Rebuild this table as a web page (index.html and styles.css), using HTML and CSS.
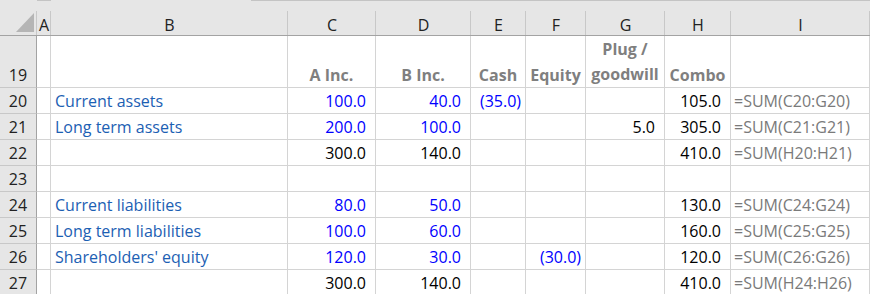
FILE: index.html
```html
<!DOCTYPE html>
<html>
    <head>
        <title>Consolidation</title>
        <link rel="stylesheet" href="styles.css">
    </head>
    <body>
        <div class="sheet">
            <div class="corner">
                <svg width="18" height="19" viewBox="0 0 18 19"><polygon points="18,0 18,19 0,19" fill="#b5b5b5"/></svg>
            </div>
            <div class="col">A</div>
            <div class="col first">B</div>
            <div class="col">C</div>
            <div class="col">D</div>
            <div class="col">E</div>
            <div class="col">F</div>
            <div class="col">G</div>
            <div class="col">H</div>
            <div class="col">I</div>

            <div class="row">19</div>
            <div class="c"></div>
            <div class="c"></div>
            <div class="c head">A Inc.</div>
            <div class="c head">B Inc.</div>
            <div class="c head">Cash</div>
            <div class="c head">Equity</div>
            <div class="c head wrap">Plug /<br>goodwill</div>
            <div class="c head">Combo</div>
            <div class="c"></div>

            <div class="row">20</div>
            <div class="c"></div>
            <div class="c label">Current assets</div>
            <div class="c num input">100.0</div>
            <div class="c num input">40.0</div>
            <div class="c num neg input">(35.0)</div>
            <div class="c"></div>
            <div class="c"></div>
            <div class="c num">105.0</div>
            <div class="c formula">=SUM(C20:G20)</div>

            <div class="row">21</div>
            <div class="c"></div>
            <div class="c label">Long term assets</div>
            <div class="c num input">200.0</div>
            <div class="c num input">100.0</div>
            <div class="c"></div>
            <div class="c"></div>
            <div class="c num">5.0</div>
            <div class="c num">305.0</div>
            <div class="c formula">=SUM(C21:G21)</div>

            <div class="row">22</div>
            <div class="c"></div>
            <div class="c"></div>
            <div class="c num">300.0</div>
            <div class="c num">140.0</div>
            <div class="c"></div>
            <div class="c"></div>
            <div class="c"></div>
            <div class="c num">410.0</div>
            <div class="c formula">=SUM(H20:H21)</div>

            <div class="row">23</div>
            <div class="c"></div>
            <div class="c"></div>
            <div class="c"></div>
            <div class="c"></div>
            <div class="c"></div>
            <div class="c"></div>
            <div class="c"></div>
            <div class="c"></div>
            <div class="c"></div>

            <div class="row">24</div>
            <div class="c"></div>
            <div class="c label">Current liabilities</div>
            <div class="c num input">80.0</div>
            <div class="c num input">50.0</div>
            <div class="c"></div>
            <div class="c"></div>
            <div class="c"></div>
            <div class="c num">130.0</div>
            <div class="c formula">=SUM(C24:G24)</div>

            <div class="row">25</div>
            <div class="c"></div>
            <div class="c label">Long term liabilities</div>
            <div class="c num input">100.0</div>
            <div class="c num input">60.0</div>
            <div class="c"></div>
            <div class="c"></div>
            <div class="c"></div>
            <div class="c num">160.0</div>
            <div class="c formula">=SUM(C25:G25)</div>

            <div class="row">26</div>
            <div class="c"></div>
            <div class="c label">Shareholders' equity</div>
            <div class="c num input">120.0</div>
            <div class="c num input">30.0</div>
            <div class="c"></div>
            <div class="c num neg input">(30.0)</div>
            <div class="c"></div>
            <div class="c num">120.0</div>
            <div class="c formula">=SUM(C26:G26)</div>

            <div class="row">27</div>
            <div class="c"></div>
            <div class="c"></div>
            <div class="c num">300.0</div>
            <div class="c num">140.0</div>
            <div class="c"></div>
            <div class="c"></div>
            <div class="c"></div>
            <div class="c num">410.0</div>
            <div class="c formula">=SUM(H24:H26)</div>
        </div>
    </body>
</html>
```

FILE: styles.css
```css
body {
    margin: 0;
    background: #fff;
    font-family: "Open Sans", Lato, sans-serif;
    font-size: 16px;
    color: #000;
    overflow: hidden;
}
.sheet {
    display: grid;
    grid-template-columns: 37px 14px 237px 88px 95px 55px 60px 79px 66px 1fr;
    grid-template-rows: 36px 52px repeat(8, 26px);
}
.sheet > div {
    box-sizing: border-box;
    display: flex;
    align-items: flex-end;
    line-height: 20px;
    padding-bottom: 2px;
    white-space: nowrap;
    overflow: hidden;
}

/* column and row headers */
.corner, .col {
    background: linear-gradient(#c8c8c8, #c8c8c8) right bottom / 1px 24px no-repeat,
                #e6e6e6;
    border-bottom: 1px solid #a3a3a3;
    color: #222;
}
.col {
    justify-content: center;
    align-items: center;
    padding: 11px 0 0 0 !important;
    background: linear-gradient(#c8c8c8, #c8c8c8) right bottom / 1px 24px no-repeat,
                linear-gradient(#c4c4c4, #c4c4c4) left top / 100% 1px no-repeat,
                #e6e6e6;
}
.col.first {
    background: linear-gradient(#c8c8c8, #c8c8c8) right bottom / 1px 24px no-repeat,
                linear-gradient(#c4c4c4, #c4c4c4) right top / 37px 1px no-repeat,
                #e6e6e6;
}
.corner {
    padding: 0 3px 3px 0 !important;
    justify-content: flex-end;
}
.corner svg {
    display: block;
}
.row {
    background: #e6e6e6;
    border-right: 1px solid #a3a3a3;
    border-bottom: 1px solid #c8c8c8;
    justify-content: center;
    color: #222;
}

/* cells */
.c {
    border-right: 1px solid #d4d4d4;
    border-bottom: 1px solid #d4d4d4;
    padding: 0 4px;
}
.head {
    justify-content: center;
    text-align: center;
    font-weight: bold;
    color: #7f7f7f;
}
.head.wrap {
    line-height: 25px;
    padding-bottom: 0;
    white-space: normal;
}
.label {
    color: #1c60b3;
}
.num {
    justify-content: flex-end;
    padding-right: 9px;
    font-variant-numeric: tabular-nums;
}
.num.neg {
    padding-right: 4px;
}
.input {
    color: #0000ff;
}
.formula {
    color: #7a7a7a;
    padding-left: 3px;
}
```
